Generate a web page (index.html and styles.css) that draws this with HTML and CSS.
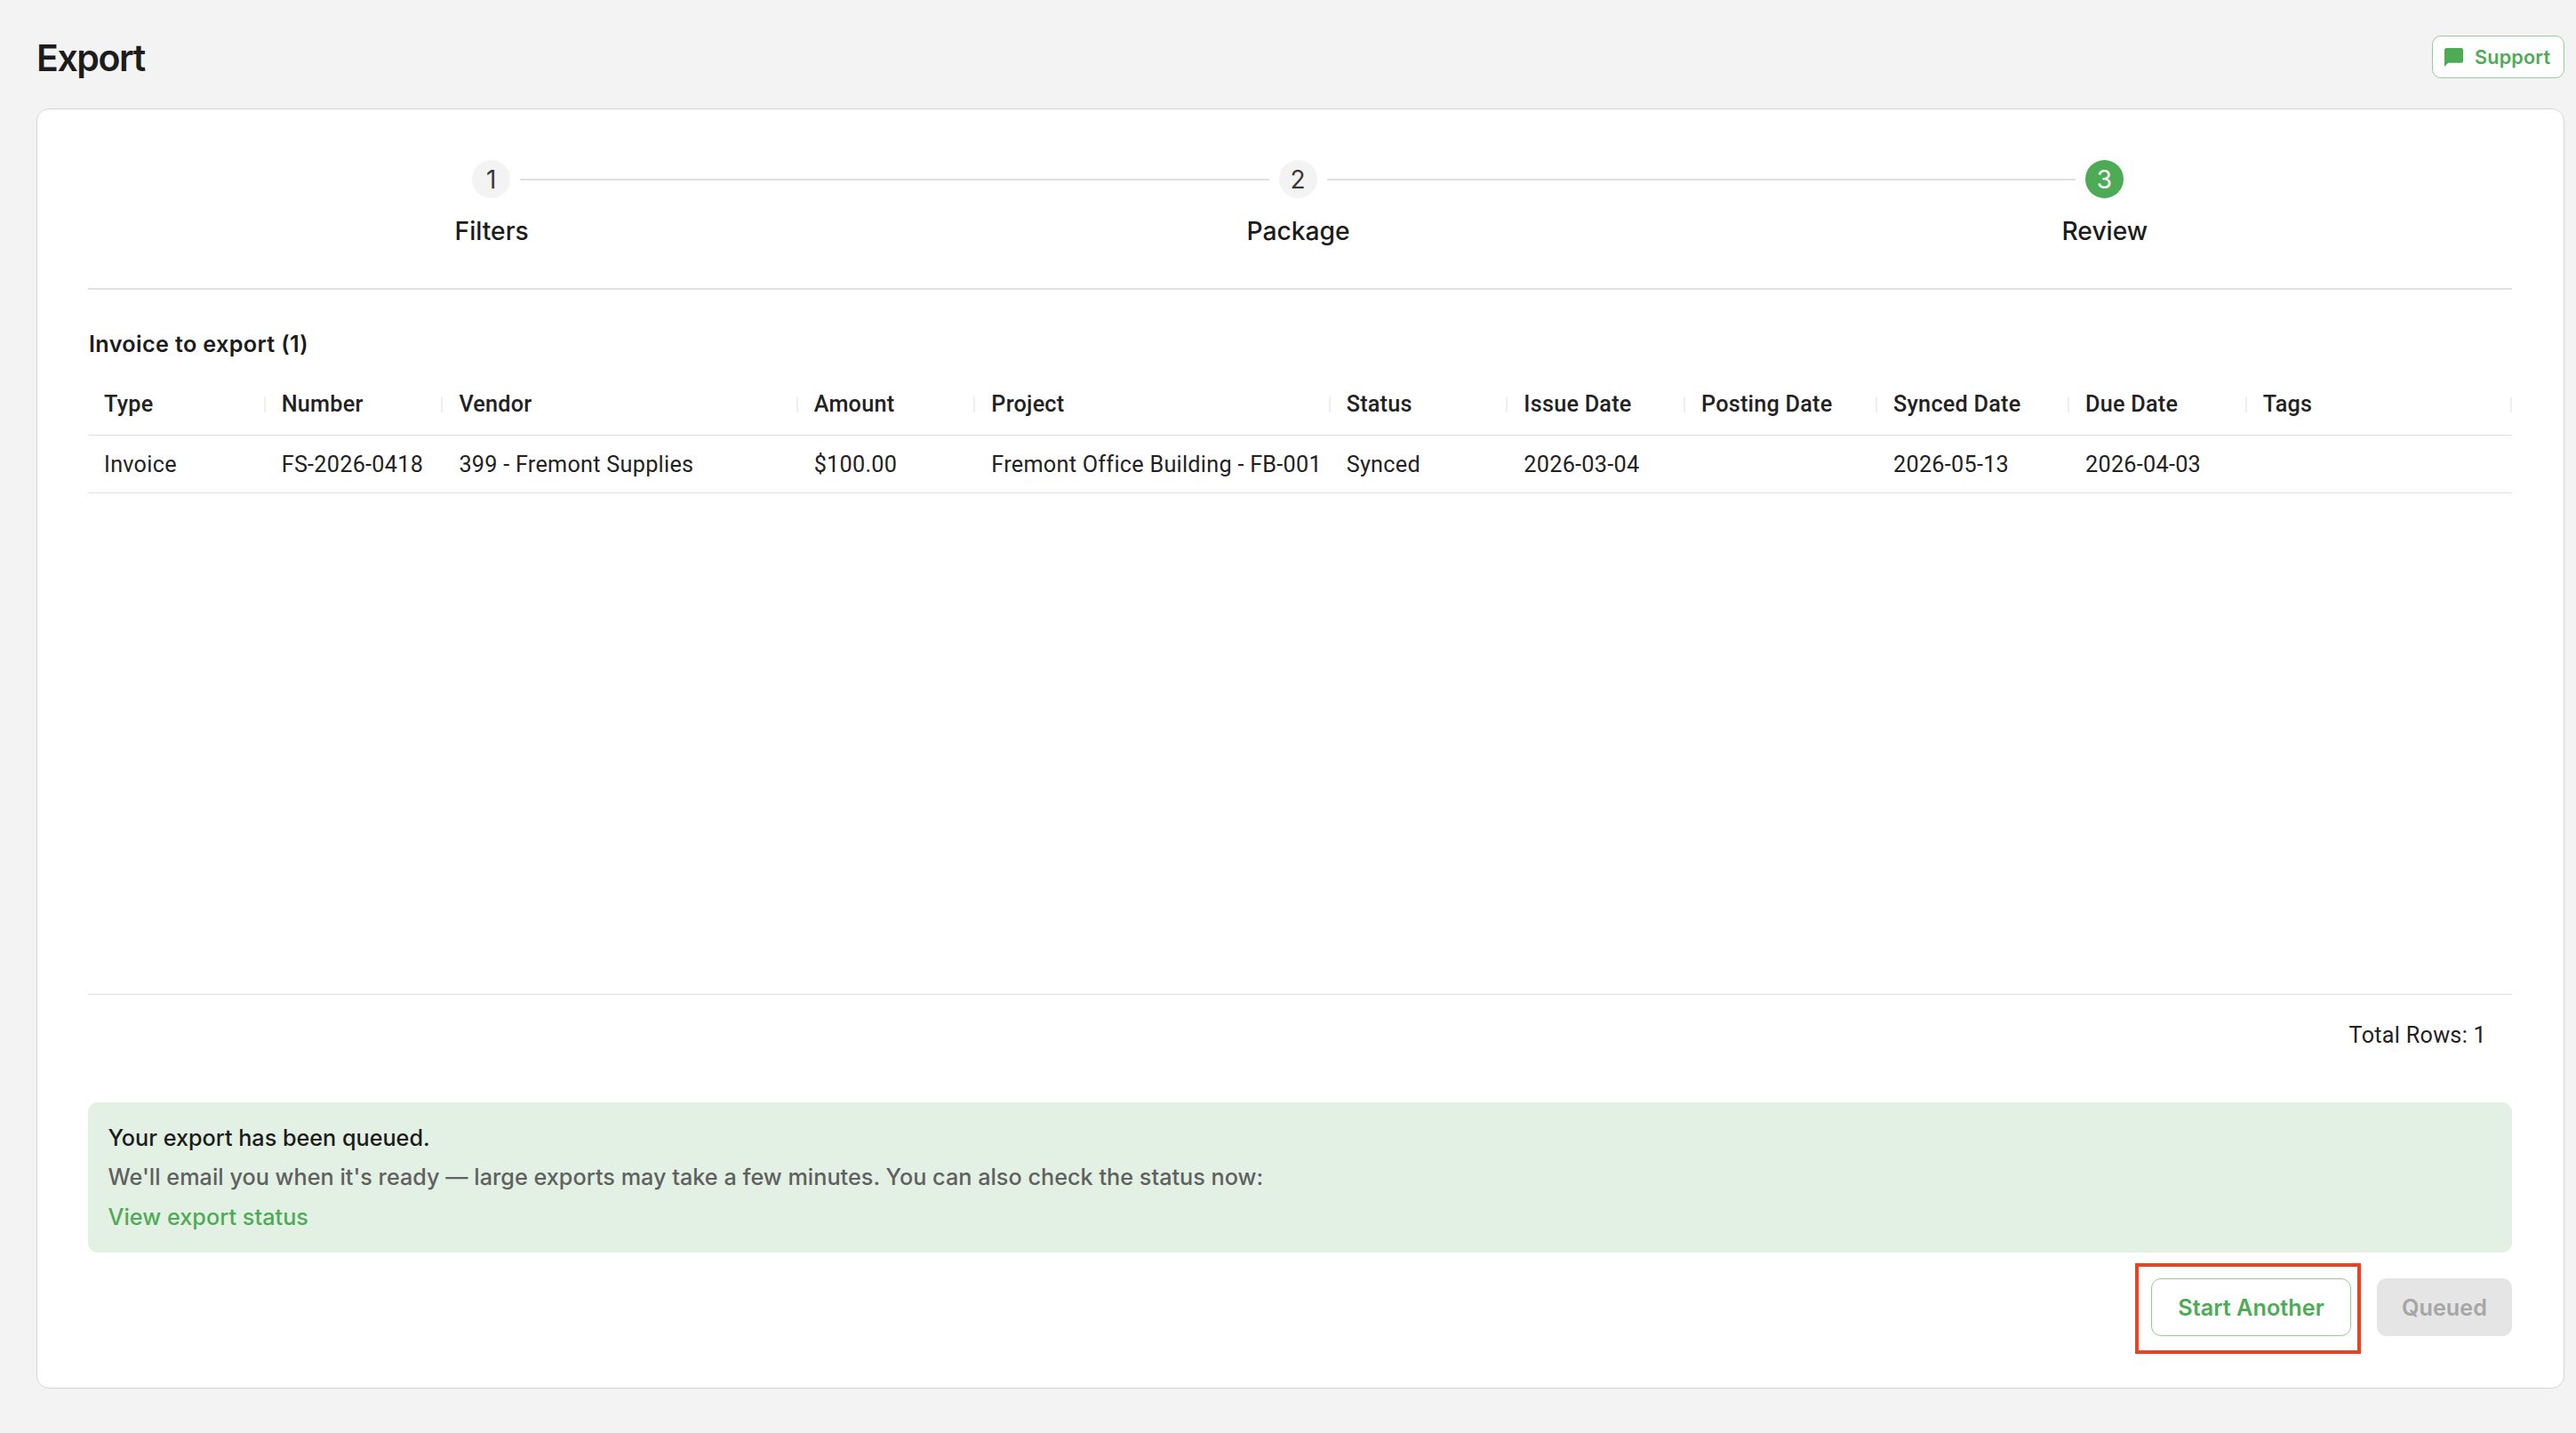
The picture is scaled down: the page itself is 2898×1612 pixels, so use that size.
FILE: index.html
```html
<!DOCTYPE html>
<html lang="en">
<head>
    <meta charset="UTF-8">
    <meta name="viewport" content="width=device-width, initial-scale=1.0">
    <title>Export</title>
    <link rel="stylesheet" href="styles.css">
</head>
<body>
    <header class="page-header">
        <h1>Export</h1>
        <button class="support-btn">
            <svg class="chat-icon" viewBox="2 2 20 20" width="21" height="21" aria-hidden="true">
                <path fill="currentColor" d="M20 2H4c-1.1 0-2 .9-2 2v18l4-4h14c1.1 0 2-.9 2-2V4c0-1.1-.9-2-2-2z"/>
            </svg>
            <span>Support</span>
        </button>
    </header>

    <main class="card">
        <!-- Stepper -->
        <div class="stepper">
            <div class="step">
                <div class="step-track">
                    <span class="line hidden"></span>
                    <span class="circle">1</span>
                    <span class="line"></span>
                </div>
                <div class="step-label">Filters</div>
            </div>
            <div class="step">
                <div class="step-track">
                    <span class="line"></span>
                    <span class="circle">2</span>
                    <span class="line"></span>
                </div>
                <div class="step-label">Package</div>
            </div>
            <div class="step">
                <div class="step-track">
                    <span class="line"></span>
                    <span class="circle active">3</span>
                    <span class="line hidden"></span>
                </div>
                <div class="step-label">Review</div>
            </div>
        </div>

        <h2>Invoice to export (1)</h2>

        <!-- Invoice grid -->
        <div class="grid">
            <div class="grid-row grid-head">
                <div class="cell">Type</div>
                <div class="cell">Number</div>
                <div class="cell">Vendor</div>
                <div class="cell">Amount</div>
                <div class="cell">Project</div>
                <div class="cell">Status</div>
                <div class="cell">Issue Date</div>
                <div class="cell">Posting Date</div>
                <div class="cell">Synced Date</div>
                <div class="cell">Due Date</div>
                <div class="cell">Tags</div>
            </div>
            <div class="grid-row">
                <div class="cell">Invoice</div>
                <div class="cell">FS-2026-0418</div>
                <div class="cell">399 - Fremont Supplies</div>
                <div class="cell">$100.00</div>
                <div class="cell">Fremont Office Building - FB-001</div>
                <div class="cell">Synced</div>
                <div class="cell">2026-03-04</div>
                <div class="cell"></div>
                <div class="cell">2026-05-13</div>
                <div class="cell">2026-04-03</div>
                <div class="cell"></div>
            </div>
        </div>
        <div class="grid-footer">Total Rows: 1</div>

        <!-- Queued message -->
        <div class="alert">
            <p class="alert-title">Your export has been queued.</p>
            <p class="alert-text">We'll email you when it's ready — large exports may take a few minutes. You can also check the status now:</p>
            <a class="alert-link">View export status</a>
        </div>

        <div class="actions">
            <div class="highlight">
                <button class="btn btn-outline">Start Another</button>
            </div>
            <button class="btn btn-queued" disabled>Queued</button>
        </div>
    </main>
</body>
</html>
```
FILE: styles.css
```css
* { box-sizing: border-box; margin: 0; padding: 0; }
body {
    font-family: Inter, "Liberation Sans", sans-serif;
    background-color: #f3f3f3;
    color: #1c1c1c;
    height: 1612px;
}

/* Header */
.page-header {
    display: flex;
    justify-content: space-between;
    align-items: center;
    height: 122px;
    padding: 40px 13px 34px 41px;
}
h1 {
    font-size: 41px;
    font-weight: 600;
    letter-spacing: -1.4px;
    padding-top: 2px;
}
.support-btn {
    display: flex;
    align-items: center;
    gap: 13px;
    width: 149px;
    height: 48px;
    padding-left: 13px;
    border: 1px solid #94cd98;
    border-radius: 10px;
    background-color: white;
    color: #4eab55;
    font: 600 21.6px Inter, sans-serif;
    letter-spacing: 0.2px;
}

/* Card */
.card {
    height: 1440px;
    margin: 0 13px 0 41px;
    padding: 57px 58px 0 57px;
    background-color: white;
    border: 1px solid #d5d5d5;
    border-radius: 14px;
}

/* Stepper */
.stepper {
    display: grid;
    grid-template-columns: repeat(3, 1fr);
    height: 146px;
    padding-right: 5px;
    margin-bottom: 45px;
    border-bottom: 2px solid #e0e0e0;
}
.step-track {
    display: flex;
    align-items: center;
    gap: 11px;
    height: 43px;
}
.line {
    flex: 1;
    height: 2px;
    background-color: #e0e0e0;
}
.line.hidden { visibility: hidden; }
.circle {
    width: 43px;
    height: 43px;
    border-radius: 50%;
    background-color: #f3f3f3;
    color: #383838;
    font-size: 28px;
    line-height: 45px;
    text-align: center;
}
.circle.active { background-color: #4eab55; color: white; }
.step-label {
    margin-top: 20px;
    padding-left: 1px;
    font-size: 28.2px;
    font-weight: 500;
    line-height: 34px;
    text-align: center;
}

/* Grid */
h2 {
    font-size: 25.2px;
    font-weight: 600;
    line-height: 32px;
    letter-spacing: 0.35px;
    padding-left: 1px;
    margin-bottom: 17px;
}
.grid {
    height: 699px;
    border-bottom: 1px solid #e0e0e0;
    font: 400 25.2px Roboto, sans-serif;
    letter-spacing: 0.28px;
    color: #222;
}
.grid-row {
    display: grid;
    grid-template-columns: 199.7px 199.7px 399.3px 199.7px 399.3px 199.7px 199.7px 216px 216px 199.7px 1fr;
    align-items: center;
    height: 65px;
    border-bottom: 1px solid #e0e0e0;
}
.grid-head { height: 70px; font-weight: 500; letter-spacing: 0.25px; }
.cell { padding-left: 18px; white-space: nowrap; }
.grid-head .cell {
    height: 18px;
    line-height: 18px;
    border-right: 2px solid #f0f0f0;
}
.grid-footer {
    height: 121px;
    padding-right: 29px;
    font: 400 25.2px/91px Roboto, sans-serif;
    letter-spacing: 0.28px;
    text-align: right;
    color: #222;
}

/* Alert */
.alert {
    height: 169px;
    padding: 17.5px 22.5px;
    border-radius: 11px;
    background-color: #e3f1e4;
    font-size: 25.2px;
    font-weight: 500;
    line-height: 44.5px;
}
.alert-text { color: #606060; letter-spacing: 0.03px; }
.alert-link { color: #4eab55; letter-spacing: 0.05px; }

/* Buttons */
.actions {
    display: flex;
    justify-content: flex-end;
    gap: 29px;
    margin-top: 29px;
}
.btn {
    height: 65px;
    border-radius: 11px;
    font: 600 25.2px Inter, sans-serif;
    letter-spacing: 0.05px;
}
.btn-outline {
    width: 225px;
    border: 1px solid #94cd98;
    background-color: white;
    color: #4eab55;
}
.btn-queued {
    width: 152px;
    border: none;
    background-color: #e5e5e5;
    color: #a6a6a6;
}
.highlight { position: relative; }
.highlight::after {
    content: "";
    position: absolute;
    top: -17px;
    right: -11px;
    bottom: -20px;
    left: -18px;
    border: 4px solid #ea4225;
}
```
